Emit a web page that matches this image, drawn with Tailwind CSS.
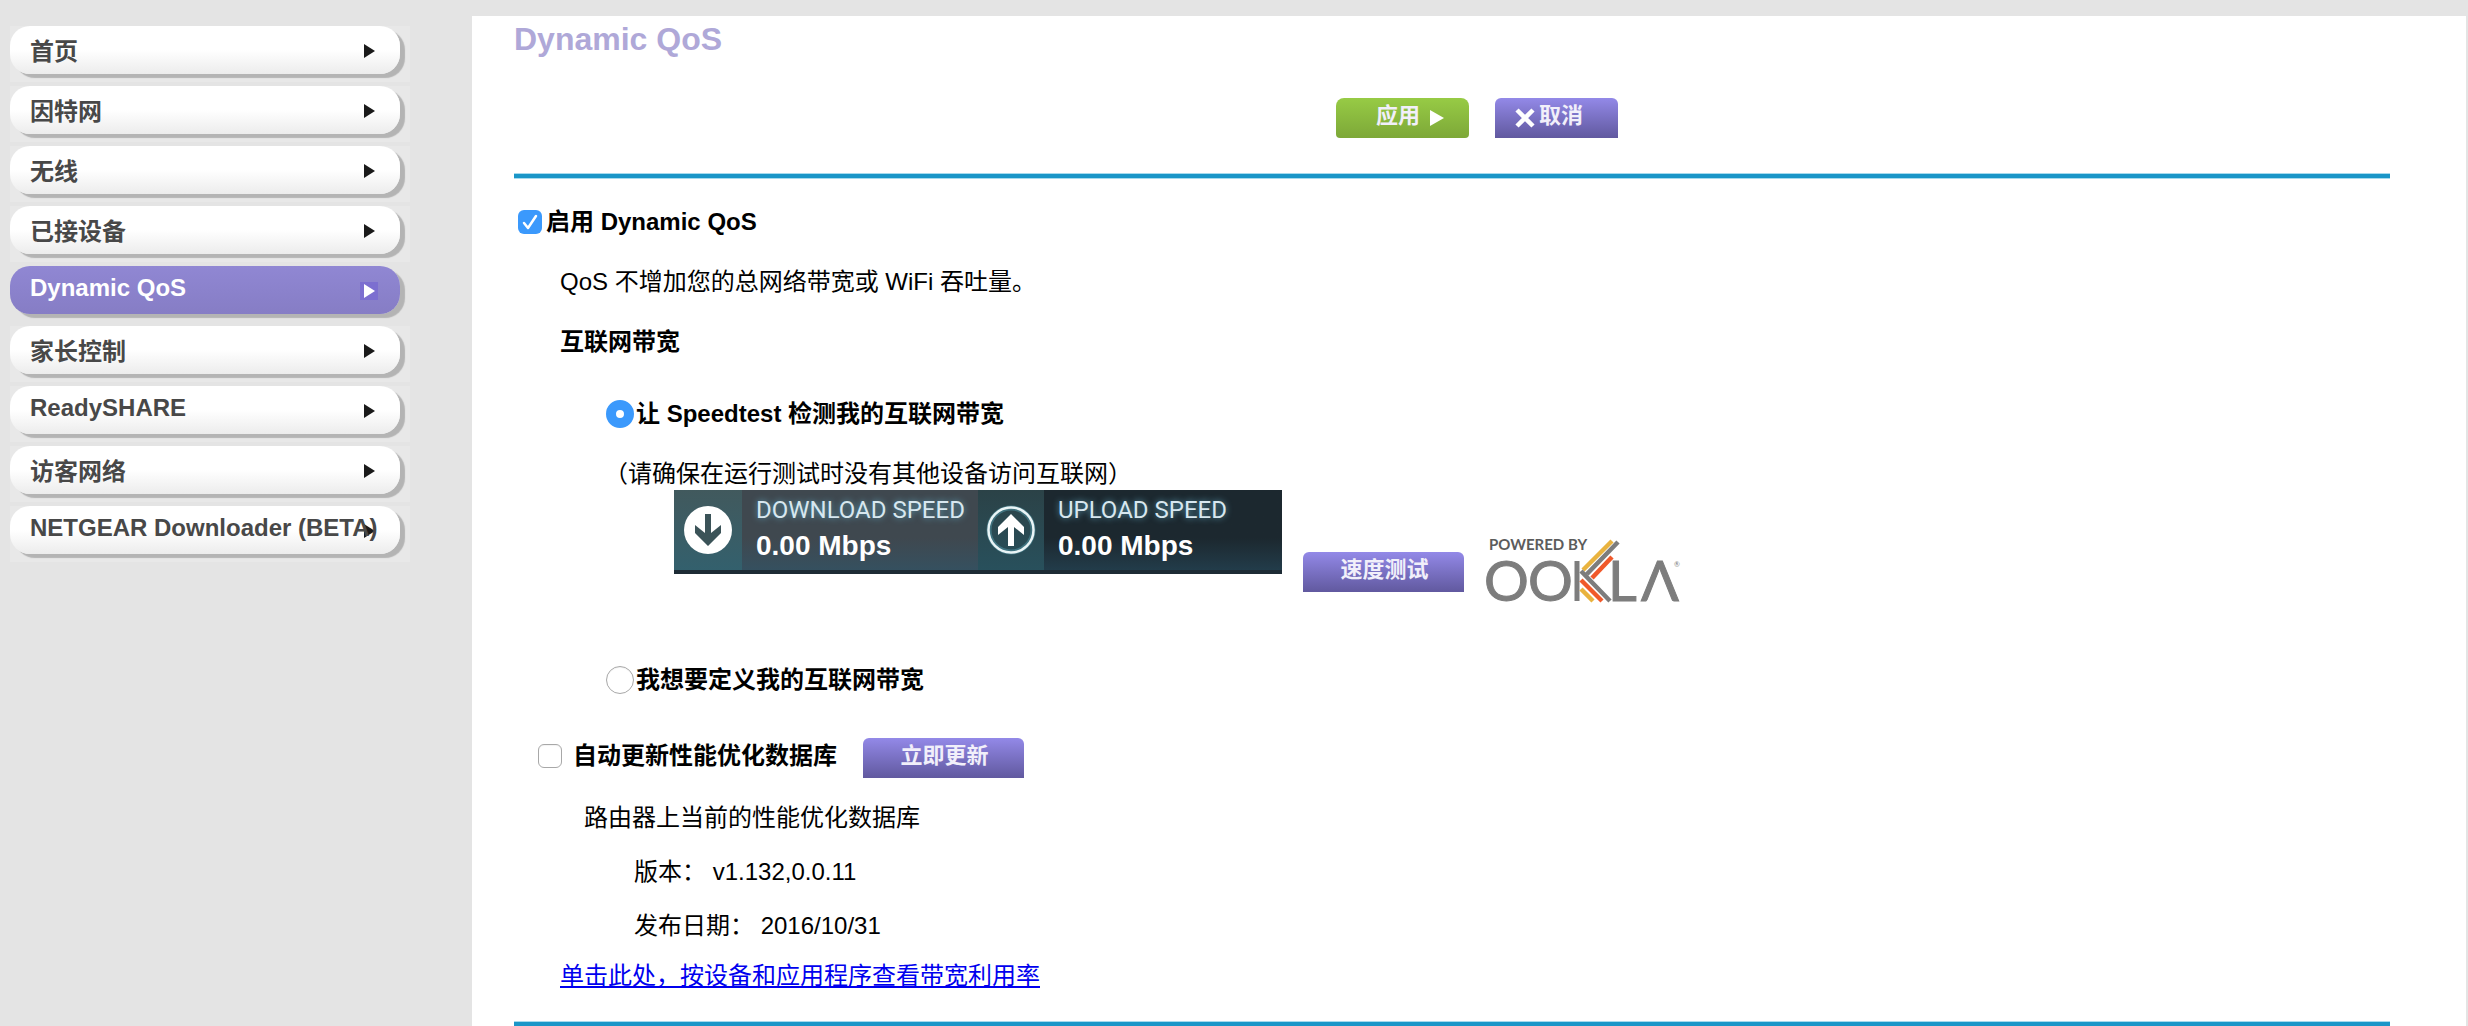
<!DOCTYPE html>
<html lang="zh-CN">
<head>
    <meta charset="UTF-8">
    <title>NETGEAR Router - Dynamic QoS</title>
    <script src="https://cdn.jsdelivr.net/npm/@tailwindcss/browser@4"></script>
</head>
<body class="bg-[#e4e4e4] font-['Liberation_Sans','Noto_Sans_CJK_SC',sans-serif] text-2xl leading-8 text-black">
    <div class="flex min-h-screen">
        <aside class="w-[472px] shrink-0 pt-[26px] pl-[10px]">
            <nav id="menu" class="flex flex-col gap-1 font-bold"></nav>
        </aside>

        <main class="mt-4 mr-0.5 min-w-0 flex-1 bg-white pr-[76px] pl-[42px]">
            <h1 class="text-[32px] leading-[46px] font-bold text-[#afa8d8]">Dynamic QoS</h1>

            <form id="qosForm">
                <div class="mt-9 flex justify-center gap-[26px] pl-[50px] text-[22px] font-bold text-[#f1effa]">
                    <button type="submit" class="flex h-10 w-[133px] items-center gap-2.5 rounded-t-lg rounded-b-sm bg-linear-to-b from-[#97cb45] to-[#7da838] pb-1 pl-10">
                        应用
                        <svg class="mt-1 h-4 w-[14px]" viewBox="0 0 14 16"><path d="M0 0L14 8L0 16Z" fill="#fff"/></svg>
                    </button>
                    <button type="reset" class="flex h-10 w-[123px] items-center gap-1 rounded-t-md bg-linear-to-b from-[#9389e8] to-[#61599f] pb-1 pl-5">
                        <svg class="mt-1 h-5 w-5" viewBox="0 0 20 20"><path d="M2 2L18 18M18 2L2 18" stroke="#fff" stroke-width="4.5"/></svg>
                        取消
                    </button>
                </div>

                <hr class="mt-[35px] h-1.5 border-y border-[#a5dbee] bg-[#1a96c8]">

                <div class="mt-[27px] flex items-center gap-1 pl-1 font-bold">
                    <span class="relative flex">
                        <input id="enableQos" type="checkbox" checked class="peer size-6 appearance-none rounded-md border border-[#b5b5b5] bg-white checked:border-0 checked:bg-[#3b99fc]">
                        <svg class="pointer-events-none absolute inset-0 hidden size-6 peer-checked:block" viewBox="0 0 24 24" fill="none"><path d="M6 13L10 18L18 6" stroke="#fff" stroke-width="2.5" stroke-linecap="round" stroke-linejoin="round"/></svg>
                    </span>
                    <label for="enableQos">启用 Dynamic QoS</label>
                </div>

                <div class="pl-[46px]">
                    <p class="mt-7">QoS 不增加您的总网络带宽或 WiFi 吞吐量。</p>
                    <h2 class="mt-7 font-bold">互联网带宽</h2>

                    <div class="mt-10 flex items-center gap-0.5 pl-[46px] font-bold">
                        <input id="bySpeedtest" type="radio" name="bandwidth" checked class="size-7 appearance-none rounded-full border border-[#a8a8a8] bg-white checked:border-[10px] checked:border-[#3b99fc]">
                        <label for="bySpeedtest">让 Speedtest 检测我的互联网带宽</label>
                    </div>
                    <p class="mt-7 pl-11">（请确保在运行测试时没有其他设备访问互联网）</p>

                    <div class="flex items-start pl-[114px]">
                        <div class="grid h-[84px] w-[608px] shrink-0 grid-cols-2 border-b-4 border-[#1d2b35] whitespace-nowrap text-white">
                            <div class="flex bg-linear-to-b from-[#3f484f] from-60% to-[#35505f]">
                                <div class="flex w-[68px] items-center justify-center bg-linear-to-b from-[#41595d] to-[#33606d]">
                                    <svg class="size-[50px]" viewBox="0 0 50 50"><circle cx="25" cy="25" r="24" fill="#fff"/><path d="M22 9H28V28L38 20V28L25 41L12 28V20L22 28Z" fill="#3b5358"/></svg>
                                </div>
                                <div class="pt-1 pl-[14px]">
                                    <p class="font-[Roboto] text-2xl text-[#d7e7ef] text-shadow-[0_0_6px_#5fa0b8]">DOWNLOAD SPEED</p>
                                    <p class="mt-1 text-[28px] leading-8 font-bold">0.00 Mbps</p>
                                </div>
                            </div>
                            <div class="flex bg-linear-to-b from-[#1c282f] from-60% to-[#223c4a]">
                                <div class="flex w-[66px] items-center justify-center bg-linear-to-b from-[#2b4247] to-[#28505c]">
                                    <svg class="size-[50px]" viewBox="0 0 50 50"><circle cx="25" cy="25" r="22" fill="none" stroke="#4f8d9c" stroke-width="5" opacity=".6"/><circle cx="25" cy="25" r="22.5" fill="none" stroke="#e9f4f6" stroke-width="2.5"/><path d="M22 41H28V22L38 30V22L25 9L12 22V30L22 22Z" fill="#fff"/></svg>
                                </div>
                                <div class="pt-1 pl-[14px]">
                                    <p class="font-[Roboto] text-2xl text-[#d7e7ef] text-shadow-[0_0_6px_#5fa0b8]">UPLOAD SPEED</p>
                                    <p class="mt-1 text-[28px] leading-8 font-bold">0.00 Mbps</p>
                                </div>
                            </div>
                        </div>
                        <div class="mt-[50px] ml-[21px] flex items-center gap-5">
                            <button type="button" class="h-10 w-[161px] rounded-t-md bg-linear-to-b from-[#9389e8] to-[#61599f] pb-1 pl-0.5 text-[22px] font-bold text-[#f1effa]">速度测试</button>
                            <svg class="h-16 w-[200px] overflow-visible" viewBox="0 0 200 64" font-family="Lato" fill="#7d7d7d" role="img" aria-label="Powered by Ookla">
                                <text x="5" y="10" font-size="15" font-weight="bold" fill="#5c5c5c">POWERED BY</text>
                                <g font-size="56" stroke="#7d7d7d">
                                    <text x="0" y="61">O</text>
                                    <text x="44" y="61">O</text>
                                    <text x="124" y="61">L</text>
                                    <text x="157" y="61">Λ</text>
                                </g>
                                <text x="190" y="27" font-size="7">®</text>
                                <g fill="none" stroke-width="4.5">
                                    <path d="M93 21V61" stroke="#7d7d7d" stroke-width="5"/>
                                    <path d="M99 30L128 1" stroke="#e9b33f"/>
                                    <path d="M108 38L128 17" stroke="#f0592a"/>
                                    <path d="M97 49L109 61" stroke="#e9b33f"/>
                                    <path d="M97 40L118 61" stroke="#f0592a"/>
                                    <path d="M103 34L134 2M97 31L126 61" stroke="#7d7d7d"/>
                                </g>
                            </svg>
                        </div>
                    </div>

                    <div class="mt-15 flex items-center gap-0.5 pl-[46px] font-bold">
                        <input id="byUser" type="radio" name="bandwidth" class="size-7 appearance-none rounded-full border border-[#a8a8a8] bg-white inset-shadow-xs checked:border-[10px] checked:border-[#3b99fc]">
                        <label for="byUser">我想要定义我的互联网带宽</label>
                    </div>
                </div>

                <div class="mt-[42px] flex pl-6 font-bold">
                    <div class="flex h-9 items-center gap-[11px]">
                        <input id="autoUpdate" type="checkbox" class="size-6 appearance-none rounded-md border border-[#a8a8a8] bg-white inset-shadow-xs checked:bg-[#3b99fc]">
                        <label for="autoUpdate">自动更新性能优化数据库</label>
                    </div>
                    <button type="button" class="ml-[26px] h-10 w-[161px] rounded-t-md bg-linear-to-b from-[#9389e8] to-[#61599f] pb-1 pl-0.5 text-[22px] text-[#f1effa]">立即更新</button>
                </div>

                <div class="pl-[70px]">
                    <p class="mt-6">路由器上当前的性能优化数据库</p>
                    <p class="mt-[22px] pl-[50px]">版本： v1.132,0.0.11</p>
                    <p class="mt-[22px] pl-[50px]">发布日期： 2016/10/31</p>
                </div>
                <p class="mt-[18px] pl-[46px]"><a href="#" class="text-[#0000ee] underline">单击此处，按设备和应用程序查看带宽利用率</a></p>

                <hr class="mt-[29px] h-1.5 border-y border-[#a5dbee] bg-[#1a96c8]">
            </form>
        </main>
    </div>

    <script>
        const menu = document.getElementById("menu");
        const items = ["首页", "因特网", "无线", "已接设备", "Dynamic QoS", "家长控制", "ReadySHARE", "访客网络", "NETGEAR Downloader (BETA)"];
        const current = "Dynamic QoS";

        items.forEach(item => {
            const active = item === current;
            const latin = /^[A-Z]/.test(item);
            const pill = active
                ? "bg-linear-to-b from-[#9087d3] to-[#867dc5] text-white"
                : "bg-linear-to-b from-white from-50% to-[#ececec] text-[#484848]";
            const row = active ? "" : "bg-[#e8e8e8]";
            const box = active ? "bg-[#7c6fd0] text-white" : "text-[#1a1a1a]";
            menu.innerHTML += `
                <div class="h-14 w-[400px] ${row}">
                    <a href="#" class="flex h-12 w-[390px] rounded-[20px] pr-[22px] pl-5 shadow-[5px_4px_1px_#b4b4b4] ${pill}">
                        <span class="relative z-10 w-0 flex-1 whitespace-nowrap ${latin ? "leading-[43px]" : "leading-[51px]"}">${item}</span>
                        <svg class="mt-4 size-[18px] ${box}" viewBox="0 0 18 18"><path d="M4 2L15 9L4 16Z" fill="currentColor"/></svg>
                    </a>
                </div>`;
        });

        document.getElementById("qosForm").addEventListener("submit", e => e.preventDefault());
    </script>
</body>
</html>
